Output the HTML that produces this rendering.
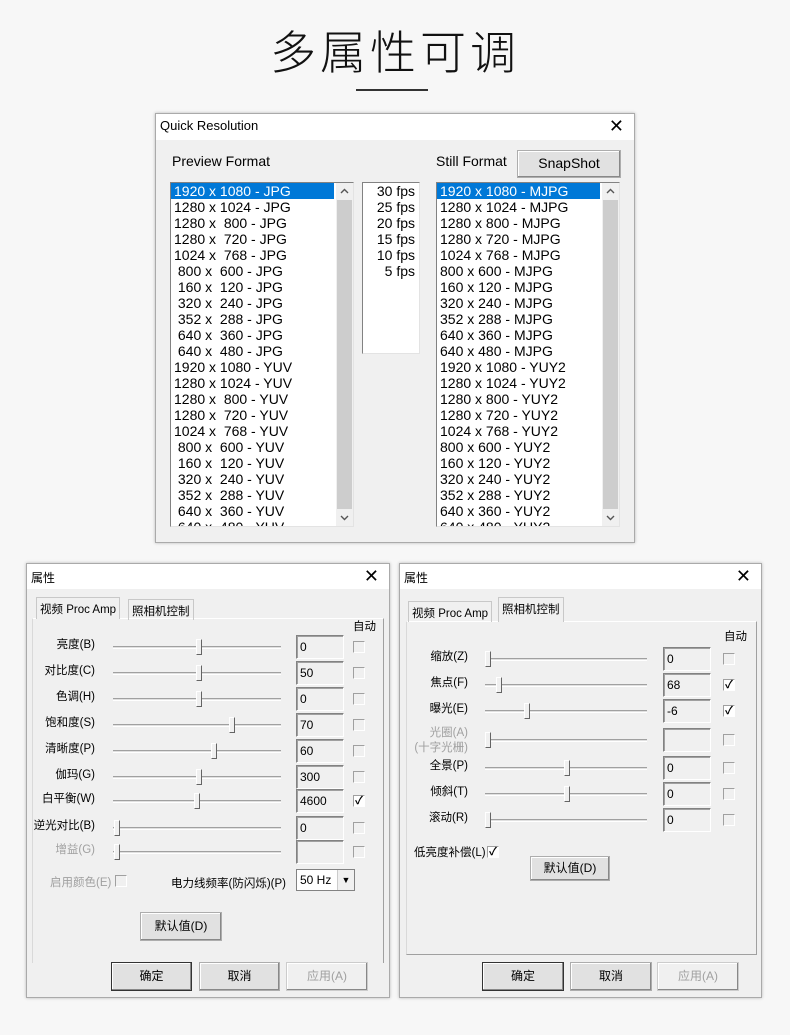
<!DOCTYPE html>
<html><head><meta charset="utf-8"><style>
*{box-sizing:border-box;margin:0;padding:0}
body{width:790px;height:1035px;background:#f7f7f7;position:relative;overflow:hidden;font-family:"Liberation Sans","Noto Sans CJK SC",sans-serif;color:#000}
.a{position:absolute}
.dlg{position:absolute;background:#f0f0f0;border:1px solid #aaa;box-shadow:0 0 3px rgba(0,0,0,.25)}
.tb{position:absolute;left:0;top:0;right:0;background:#fff;font-size:13px}
.x{position:absolute;right:10px;top:2px;font-size:18px;font-weight:300}
.list{position:absolute;background:#fff;border:1px solid #828282;border-right-color:#e3e3e3;border-bottom-color:#e3e3e3;overflow:hidden;font-size:14px;line-height:16px}
.list .r{padding-left:3px;white-space:pre;height:16px}
.sel{background:#0078d7;color:#fff}
.list .sb{position:absolute;right:0;top:0;bottom:0;width:17px;height:auto;background:#f0f0f0}
.list .sb .th{position:absolute;left:1px;right:1px;top:17px;bottom:17px;height:auto;background:#cdcdcd}
.sb svg{position:absolute;left:4px}
.btn{position:absolute;background:#e1e1e1;border:1px solid #adadad;box-shadow:inset -1px -1px #888,inset 1px 1px #fff;text-align:center;font-size:12px}
.lbl{position:absolute;font-size:11.5px;text-align:right;white-space:nowrap}
.trk{position:absolute;height:3px;border-top:1px solid #a0a0a0;border-bottom:1px solid #fff;background:#e0e0e0}
.thumb{position:absolute;width:6px;height:16px;background:#f0f0f0;border:1px solid #fff;border-right-color:#646464;border-bottom-color:#646464}
.ed{position:absolute;width:48px;height:24px;border:1px solid #828282;border-right-color:#fff;border-bottom-color:#fff;box-shadow:inset 1px 1px #a0a0a0;font-size:12px;padding:4px 0 0 3px;background:#f0f0f0}
.cb{position:absolute;width:12px;height:12px;border:1px solid #a0a0a0;border-right-color:#fff;border-bottom-color:#fff;background:#f0f0f0;font-size:11px;line-height:10px;text-align:center;font-weight:bold}
.cb.on{background:#fff}
.gray{color:#a0a0a0}
.tab{position:absolute;font-size:11.5px;border:1px solid #c8c8c8;border-bottom:none;padding:3px 3px 0;height:21px}
.panel{position:absolute;border:1px solid #d9d9d9;border-right-color:#a0a0a0;border-bottom-color:#a0a0a0}
</style></head><body>
<div class="a" style="left:0;top:22px;width:790px;text-align:center;font-size:46px;font-weight:300;letter-spacing:4px;line-height:56px;font-family:'Noto Sans CJK SC',sans-serif;color:#111">多属性可调</div>
<div class="a" style="left:356px;top:89px;width:72px;height:2px;background:#333"></div>

<div class="dlg" style="left:155px;top:113px;width:480px;height:430px">
 <div class="tb" style="height:26px;padding:4px 0 0 4px">Quick Resolution<span class="x">✕</span></div>
 <div class="a" style="left:16px;top:39px;font-size:14px">Preview Format</div>
 <div class="a" style="left:280px;top:39px;font-size:14px">Still Format</div>
 <div class="btn" style="left:361px;top:36px;width:104px;height:28px;font-size:14px;line-height:25px">SnapShot</div>
 <div class="list" style="left:14px;top:68px;width:184px;height:345px" id="l1"></div>
 <div class="list" style="left:206px;top:68px;width:58px;height:172px;text-align:right;padding-right:4px" id="f"></div>
 <div class="list" style="left:280px;top:68px;width:184px;height:345px" id="l2"></div>
</div>

<div class="dlg" style="left:26px;top:563px;width:364px;height:435px" id="d1">
 <div class="tb" style="height:25px;padding:5px 0 0 4px;font-size:12px">属性<span class="x">✕</span></div>
 <div class="panel" style="left:5px;top:54px;width:352px;height:345px;border-top-color:#fff;border-bottom:none"></div>
 <div class="tab" style="left:9px;top:33px;background:#f0f0f0;height:22px">视频 Proc Amp</div>
 <div class="tab" style="left:101px;top:35px">照相机控制</div>
 <div class="lbl" style="left:326px;top:54px">自动</div>
</div>
<div class="dlg" style="left:399px;top:563px;width:363px;height:435px" id="d2">
 <div class="tb" style="height:25px;padding:5px 0 0 4px;font-size:12px">属性<span class="x">✕</span></div>
 <div class="panel" style="left:6px;top:57px;width:351px;height:334px;border-top-color:#fff"></div>
 <div class="tab" style="left:8px;top:37px">视频 Proc Amp</div>
 <div class="tab" style="left:98px;top:33px;background:#f0f0f0;height:25px">照相机控制</div>
 <div class="lbl" style="left:324px;top:64px">自动</div>
</div>
<script>
var L1=["1920 x 1080 - JPG","1280 x 1024 - JPG","1280 x  800 - JPG","1280 x  720 - JPG","1024 x  768 - JPG"," 800 x  600 - JPG"," 160 x  120 - JPG"," 320 x  240 - JPG"," 352 x  288 - JPG"," 640 x  360 - JPG"," 640 x  480 - JPG","1920 x 1080 - YUV","1280 x 1024 - YUV","1280 x  800 - YUV","1280 x  720 - YUV","1024 x  768 - YUV"," 800 x  600 - YUV"," 160 x  120 - YUV"," 320 x  240 - YUV"," 352 x  288 - YUV"," 640 x  360 - YUV"," 640 x  480 - YUV"];
var L2=["1920 x 1080 - MJPG","1280 x 1024 - MJPG","1280 x 800 - MJPG","1280 x 720 - MJPG","1024 x 768 - MJPG","800 x 600 - MJPG","160 x 120 - MJPG","320 x 240 - MJPG","352 x 288 - MJPG","640 x 360 - MJPG","640 x 480 - MJPG","1920 x 1080 - YUY2","1280 x 1024 - YUY2","1280 x 800 - YUY2","1280 x 720 - YUY2","1024 x 768 - YUY2","800 x 600 - YUY2","160 x 120 - YUY2","320 x 240 - YUY2","352 x 288 - YUY2","640 x 360 - YUY2","640 x 480 - YUY2"];
var SB='<div class="sb"><div class="th"></div><svg style="top:5px" width="9" height="6" viewBox="0 0 9 6"><path d="M1 5 L4.5 1.5 L8 5" fill="none" stroke="#555" stroke-width="1.4"/></svg><svg style="bottom:5px" width="9" height="6" viewBox="0 0 9 6"><path d="M1 1 L4.5 4.5 L8 1" fill="none" stroke="#555" stroke-width="1.4"/></svg></div>';
function fill(id,a){var e=document.getElementById(id),h='';a.forEach(function(t,i){h+='<div class="r'+(i==0?' sel':'')+'" style="width:163px">'+t+'</div>'});e.innerHTML=h+SB}
fill('l1',L1);fill('l2',L2);
document.getElementById('f').innerHTML=['30 fps','25 fps','20 fps','15 fps','10 fps','5 fps'].map(function(t){return '<div class="r">'+t+'</div>'}).join('');
function rows(id,R,o){var d=document.getElementById(id),h='';R.forEach(function(r){var y=r[1],g=r[5]?' gray':'';
var two=r[0].indexOf('<br>')>=0;
h+='<div class="lbl'+g+'" style="right:'+(364-o.lx)+'px;top:'+(two?y-14:y-9)+'px;line-height:15px">'+r[0]+'</div>';
h+='<div class="trk" style="left:'+o.tx+'px;top:'+(y-1)+'px;width:'+o.tw+'px"></div>';
h+='<div class="thumb" style="left:'+(r[2]-3)+'px;top:'+(y-8)+'px"></div>';
h+='<div class="ed" style="left:'+o.ex+'px;top:'+(y-12)+'px">'+r[3]+'</div>';
h+='<div class="cb'+(r[4]?' on':'')+'" style="left:'+o.cx+'px;top:'+(y-6)+'px">'+(r[4]?'✓':'')+'</div>';});
d.insertAdjacentHTML('beforeend',h)}
rows('d1',[["亮度(B)",83,172,"0"],["对比度(C)",109,172,"50"],["色调(H)",135,172,"0"],["饱和度(S)",161,205,"70"],["清晰度(P)",187,187,"60"],["伽玛(G)",213,172,"300"],["白平衡(W)",237,170,"4600",1],["逆光对比(B)",264,90,"0"],["增益(G)",288,90,"",0,1]],{lx:70,tx:86,tw:168,ex:269,cx:326});
rows('d2',[["缩放(Z)",95,88,"0"],["焦点(F)",121,99,"68",1],["曝光(E)",147,127,"-6",1],["光圈(A)<br>(十字光栅)",176,88,"",0,1],["全景(P)",204,167,"0"],["倾斜(T)",230,167,"0"],["滚动(R)",256,88,"0"]],{lx:71,tx:85,tw:162,ex:263,cx:323});
</script>
<div class="lbl gray" style="left:50px;top:874px">启用颜色(E)</div>
<div class="cb" style="left:115px;top:875px"></div>
<div class="lbl" style="left:171px;top:875px">电力线频率(防闪烁)(P)</div>
<div class="a" style="left:296px;top:869px;width:59px;height:22px;background:#fff;border:1px solid #828282;font-size:12px;padding:3px 0 0 3px">50 Hz<span class="a" style="right:0;top:0;width:17px;height:20px;background:#f0f0f0;border-left:1px solid #ccc;font-size:9px;text-align:center;line-height:20px">▼</span></div>
<div class="btn" style="left:140px;top:912px;width:82px;height:29px;line-height:26px">默认值(D)</div>
<div class="btn" style="left:111px;top:962px;width:81px;height:29px;line-height:26px;border-color:#333">确定</div>
<div class="btn" style="left:199px;top:962px;width:81px;height:29px;line-height:26px">取消</div>
<div class="btn gray" style="left:286px;top:962px;width:82px;height:29px;line-height:26px;background:#f0f0f0;border-color:#ccc">应用(A)</div>
<div class="lbl" style="left:414px;top:844px">低亮度补偿(L)</div>
<div class="cb on" style="left:487px;top:846px">✓</div>
<div class="btn" style="left:530px;top:856px;width:80px;height:25px;line-height:22px">默认值(D)</div>
<div class="btn" style="left:482px;top:962px;width:82px;height:29px;line-height:26px;border-color:#333">确定</div>
<div class="btn" style="left:570px;top:962px;width:82px;height:29px;line-height:26px">取消</div>
<div class="btn gray" style="left:657px;top:962px;width:82px;height:29px;line-height:26px;background:#f0f0f0;border-color:#ccc">应用(A)</div>
</body></html>
